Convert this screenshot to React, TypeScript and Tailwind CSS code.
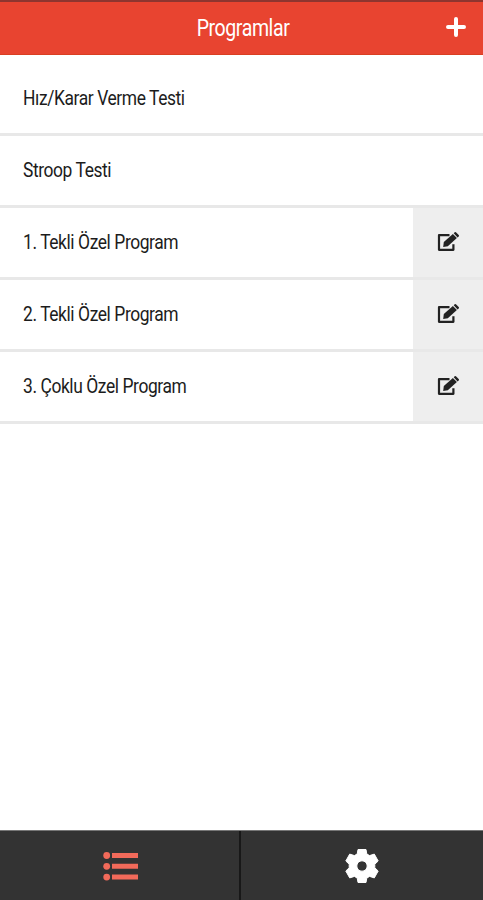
import React from 'react';

interface Program {
  id: number;
  title: string;
  editable: boolean;
}

const programs: Program[] = [
  { id: 1, title: 'Hız/Karar Verme Testi', editable: false },
  { id: 2, title: 'Stroop Testi', editable: false },
  { id: 3, title: '1. Tekli Özel Program', editable: true },
  { id: 4, title: '2. Tekli Özel Program', editable: true },
  { id: 5, title: '3. Çoklu Özel Program', editable: true },
];

const PlusIcon = () => (
  <svg width="20" height="20" viewBox="0 0 20 20" fill="none" stroke="#fff" strokeWidth="4" strokeLinecap="round">
    <path d="M10 2v16M2 10h16" />
  </svg>
);

const EditIcon = () => (
  <svg width="24" height="22" viewBox="0 0 24 22">
    <path d="M13.5 4.2H3v14.6h14.4v-5.6" fill="none" stroke="#222" strokeWidth="2.2" strokeLinejoin="round" />
    <path d="M7.2 16l.6-4.9 9.1-8.1 4 4.1-9.1 8.2z" fill="#222" />
    <path d="M17.7 2.3l1-1q.8-.7 1.5.1l2.5 2.5q.7.8 0 1.5l-1.1 1z" fill="#222" />
  </svg>
);

const ListIcon = () => (
  <svg width="36" height="30" viewBox="0 0 36 30" fill="#f26a5a">
    <circle cx="3.7" cy="4.5" r="3.4" />
    <circle cx="3.7" cy="15.3" r="3.4" />
    <circle cx="3.7" cy="26.1" r="3.4" />
    <path d="M9 2h26v5H9zM9 12.8h26v5H9zM9 23.6h26v5H9z" />
  </svg>
);

const GearIcon = () => (
  <svg width="36" height="36" viewBox="0 0 36 36">
    <path
      d="M14 1.5h8l.8 4.5 2.8 1.6 4.7-1.5 3.9 6.9-3.4 3.2v3.6l3.4 3.2-3.9 6.9-4.7-1.5-2.8 1.6-.8 4.5h-8l-.8-4.5-2.8-1.6-4.7 1.5-3.9-6.9 3.4-3.2v-3.6l-3.4-3.2 3.9-6.9 4.7 1.5L13.2 6zM18 12.8a5.2 5.2 0 1 0 0 10.4 5.2 5.2 0 0 0 0-10.4z"
      fill="#fff"
      fillRule="evenodd"
      stroke="#fff"
      strokeWidth="1"
      strokeLinejoin="round"
    />
  </svg>
);

const App: React.FC = () => {
  return (
    <div className="flex h-[900px] w-[483px] flex-col bg-white font-['Roboto',sans-serif] text-[#1c1c1c]">
      <header className="grid h-[55px] shrink-0 grid-cols-[1fr_auto_1fr] items-center border-t-2 border-b border-t-[#8e352f] border-b-[#d93f22] bg-[#e84430]">
        <h1 className="col-start-2 origin-center translate-x-[1.5px] scale-x-[0.85] pt-[3px] text-[23px] tracking-[-0.5px] text-white">
          Programlar
        </h1>
        <button className="mr-[17px] mb-[2px] justify-self-end" aria-label="Ekle">
          <PlusIcon />
        </button>
      </header>

      <main className="flex-1 pt-[9px]">
        {programs.map((program) => (
          <div key={program.id} className="flex h-[72px] border-b-[3px] border-[#e8e8e8]">
            <div className="flex flex-1 items-center pl-[23px]">
              <span className="origin-left scale-x-[0.83] text-[21px] tracking-[-0.5px] whitespace-nowrap">{program.title}</span>
            </div>
            {program.editable && (
              <button className="flex w-[70px] items-center justify-center bg-[#eee] pb-[2px]" aria-label="Düzenle">
                <EditIcon />
              </button>
            )}
          </div>
        ))}
      </main>

      <nav className="flex h-[70px] shrink-0 border-t border-[#777] bg-[#333]">
        <button className="flex w-[241px] items-center justify-center border-r-2 border-[#181818] pl-[2px]" aria-label="Programlar">
          <ListIcon />
        </button>
        <button className="flex flex-1 items-center justify-center" aria-label="Ayarlar">
          <GearIcon />
        </button>
      </nav>
    </div>
  );
};

export default App;
